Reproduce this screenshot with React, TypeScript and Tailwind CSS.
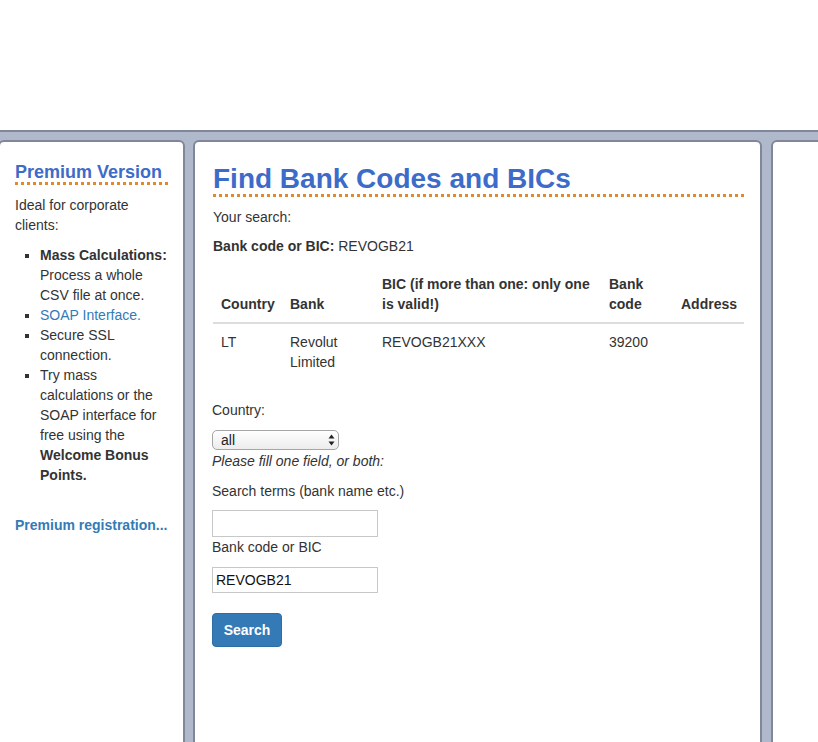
import React from "react";

const dots =
  "h-[3px] bg-[repeating-linear-gradient(90deg,#df8a2f_0px,#df8a2f_3px,transparent_3px,transparent_6px)]";

function Sidebar() {
  return (
    <div className="w-[187px] -ml-[2px] shrink-0 h-[640px] bg-white border-2 border-[#7f8799] rounded-t-[6px] pl-[15px] pr-[12px] pt-[20px]">
      <h2 className="text-[18px] leading-[20px] font-bold text-[#3d6bc9]">Premium Version</h2>
      <div className={dots} />
      <p className="mt-[10px] mb-[10px]">Ideal for corporate clients:</p>
      <ul className="list-[square] pl-[25px] mb-[30px]">
        <li>
          <b>Mass Calculations:</b> Process a whole CSV file at once.
        </li>
        <li>
          <a href="#" className="text-[#337ab7]">
            SOAP Interface.
          </a>
        </li>
        <li>Secure SSL connection.</li>
        <li>
          Try mass calculations or the SOAP interface for free using the <b>Welcome Bonus Points.</b>
        </li>
      </ul>
      <a href="#" className="font-bold text-[#337ab7]">
        Premium registration...
      </a>
    </div>
  );
}

function ResultTable() {
  return (
    <table className="w-[531px] table-fixed border-collapse mb-[20px]">
      <colgroup>
        <col className="w-[69px]" />
        <col className="w-[92px]" />
        <col className="w-[227px]" />
        <col className="w-[72px]" />
        <col className="w-[71px]" />
      </colgroup>
      <thead>
        <tr className="border-b-2 border-[#dddddd]">
          {["Country", "Bank", "BIC (if more than one: only one is valid!)", "Bank code", "Address"].map((h) => (
            <th key={h} className="p-[8px] text-left align-bottom font-bold">
              {h}
            </th>
          ))}
        </tr>
      </thead>
      <tbody>
        <tr>
          <td className="p-[8px] align-top">LT</td>
          <td className="p-[8px] align-top">Revolut Limited</td>
          <td className="p-[8px] align-top">REVOGB21XXX</td>
          <td className="p-[8px] align-top">39200</td>
          <td className="p-[8px] align-top"></td>
        </tr>
      </tbody>
    </table>
  );
}

function SearchForm() {
  return (
    <form className="-ml-px" onSubmit={(e) => e.preventDefault()}>
      <p className="mb-[10px]">Country:</p>
      <div className="relative w-[127px] h-[20px]">
        <select className="appearance-none w-full h-full border border-[#a6a6a6] rounded-[5px] bg-[linear-gradient(#ffffff,#ececec)] pl-[8px] text-[14px] leading-[18px] text-[#222]">
          <option>all</option>
        </select>
        <svg className="absolute right-[4px] top-[4px] pointer-events-none" width="7" height="12" viewBox="0 0 7 12">
          <path d="M3.5 0.5 L6.5 4.5 L0.5 4.5 Z" fill="#222" />
          <path d="M3.5 11.5 L6.5 7.5 L0.5 7.5 Z" fill="#222" />
        </svg>
      </div>
      <p className="italic mt-[1px]">Please fill one field, or both:</p>
      <p className="mt-[10px] mb-[9px]">Search terms (bank name etc.)</p>
      <input className="block w-[166px] h-[27px] border border-[#c8c8c8] px-[3px] outline-none" />
      <p className="mb-[10px]">Bank code or BIC</p>
      <input
        defaultValue="REVOGB21"
        className="block w-[166px] h-[26px] border border-[#c8c8c8] px-[3px] text-[#111] outline-none"
      />
      <button className="mt-[20px] w-[70px] h-[34px] rounded-[4px] bg-[#337ab7] border border-[#2e6da4] text-white font-bold">
        Search
      </button>
    </form>
  );
}

export default function App() {
  return (
    <div className="h-[742px] w-[818px] overflow-hidden bg-white text-[14px] leading-[20px] text-[#333] font-['Liberation_Sans',Arial,sans-serif]">
      <div className="h-[130px]" />
      <div className="border-t-2 border-[#7f8799] bg-[#b0b8cb] pt-[8px] flex gap-[8px] h-[700px]">
        <Sidebar />
        <div className="w-[569px] shrink-0 h-[640px] bg-white border-2 border-[#7f8799] rounded-t-[6px] pl-[18px] pr-[15px] pt-[21px]">
          <h1 className="text-[28px] leading-[31px] font-bold text-[#3d6bc9]">Find Bank Codes and BICs</h1>
          <div className={dots} />
          <p className="mt-[10px] mb-[9px]">Your search:</p>
          <p className="mb-[10px]">
            <b>Bank code or BIC:</b> REVOGB21
          </p>
          <ResultTable />
          <SearchForm />
        </div>
        <div className="w-[200px] shrink-0 ml-px h-[640px] bg-white border-2 border-[#7f8799] rounded-t-[6px]" />
      </div>
    </div>
  );
}
